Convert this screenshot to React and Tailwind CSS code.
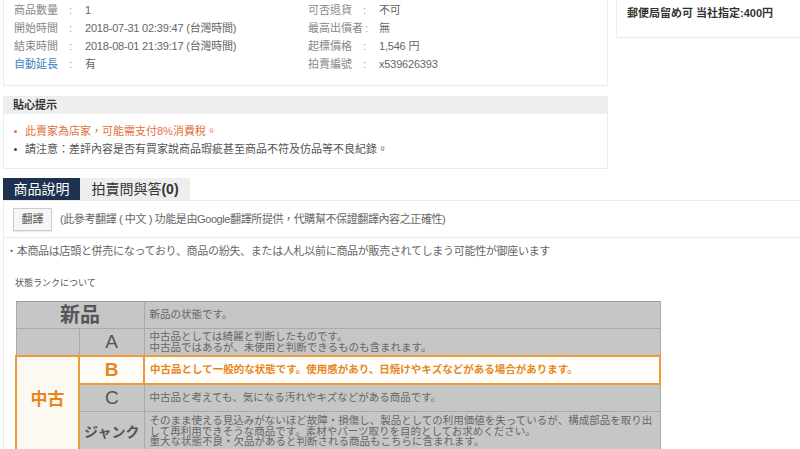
import React from 'react';

const tc = { fontFamily: '"Liberation Sans", "Noto Sans CJK TC", sans-serif' };
const jp = { fontFamily: '"Liberation Sans", "Noto Sans CJK JP", sans-serif' };

function InfoRow({ label, value, labelClass = 'text-[#888]', valueClass = 'text-[#666]' }) {
  return (
    <div className="flex h-[18px] items-center">
      <span className={`w-[55px] ${labelClass}`}>{label}</span>
      <span className="w-[16px] text-[#999]">:</span>
      <span className={`${valueClass} tracking-[-0.2px]`}>{value}</span>
    </div>
  );
}

function TopInfo() {
  return (
    <div className="flex">
      <div className="w-[605px] ml-[3px]">
        <div className="border-x border-b border-[#ececec] pt-[1px] pb-[12px] pl-[10px] flex text-[11px]">
          <div className="w-[294px]">
            <InfoRow label="商品數量" value="1" />
            <InfoRow label="開始時間" value="2018-07-31 02:39:47 (台灣時間)" />
            <InfoRow label="結束時間" value="2018-08-01 21:39:17 (台灣時間)" />
            <InfoRow label="自動延長" value="有" labelClass="text-[#3f7fbf]" />
          </div>
          <div>
            <InfoRow label="可否退貨" value="不可" />
            <div className="flex h-[18px] items-center">
              <span className="w-[57px] text-[#888]">最高出價者</span>
              <span className="w-[14px] text-[#999]">:</span>
              <span className="text-[#666]">無</span>
            </div>
            <InfoRow label="起標價格" value="1,546 円" />
            <InfoRow label="拍賣編號" value="x539626393" />
          </div>
        </div>

        <div className="mt-[10px] border border-[#ececec] h-[73px] text-[11px]">
          <div className="h-[17px] bg-[#eeeeee] pl-[9px] flex items-center text-[#333] font-bold">貼心提示</div>
          <ul className="pl-[10px] pt-[8px]">
            <li className="flex items-center h-[18px] text-[#e07040]">
              <span className="w-[3px] h-[3px] rounded-full bg-[#e07040] mr-[8px]"></span>
              此賣家為店家，可能需支付8%消費稅。
            </li>
            <li className="flex items-center h-[18px] text-[#555]">
              <span className="w-[3px] h-[3px] rounded-full bg-[#444] mr-[8px]"></span>
              請注意：差評內容是否有買家說商品瑕疵甚至商品不符及仿品等不良紀錄。
            </li>
          </ul>
        </div>
      </div>

      <div className="ml-[8px] flex-1 h-[38px] border-l border-b border-[#ececec] pl-[10px] pt-[5px] text-[11px] font-bold text-[#333]">
        郵便局留め可 当社指定:400円
      </div>
    </div>
  );
}

function Tabs() {
  return (
    <div className="mt-[9px] ml-[3px] flex border-b border-[#ececec]">
      <div className="w-[77px] h-[22px] bg-[#1d3150] text-white text-[14px] flex items-center justify-center">商品說明</div>
      <div className="w-[110px] h-[22px] bg-[#eeeeee] text-[#333] text-[14px] flex items-center justify-center">
        拍賣問與答<b>(0)</b>
      </div>
    </div>
  );
}

const g = 'bg-[#c6c6c6] border border-[#a9a9a9]';
const o = 'border-[#ef9a3a]';

function RankTable() {
  return (
    <table className="ml-[11px] mt-[12px] w-[646px] border-collapse table-fixed" style={jp}>
      <colgroup>
        <col className="w-[63px]" />
        <col className="w-[65px]" />
        <col />
      </colgroup>
      <tbody>
        <tr className="h-[27px]">
          <td colSpan={2} className={`${g} border-t-[#999] text-center text-[20px] font-bold text-[#555] leading-none`}>新品</td>
          <td className={`${g} border-t-[#999] pl-[5px] text-[10.5px] text-[#666]`}>新品の状態です。</td>
        </tr>
        <tr className="h-[27px]">
          <td className={g}></td>
          <td className={`${g} text-center text-[19px] text-[#555] leading-none`}>A</td>
          <td className={`${g} pl-[5px] text-[10.5px] leading-[11px] text-[#666]`}>
            中古品としては綺麗と判断したものです。<br />中古品ではあるが、未使用と判断できるものも含まれます。
          </td>
        </tr>
        <tr className="h-[28px]">
          <td rowSpan={3} className={`bg-[#fcf8f2] border-2 ${o} pb-[8px] text-center text-[17px] font-bold text-[#e8861c] leading-none`}>中古</td>
          <td className={`bg-[#fffcf8] border-y-2 ${o} border-l border-l-[#e6ddd0] text-center text-[19px] font-bold text-[#e8861c] leading-none`}>B</td>
          <td className={`bg-[#fffefb] border-2 ${o} pl-[5px] text-[10.5px] font-bold text-[#e8861c]`}>
            中古品として一般的な状態です。使用感があり、日焼けやキズなどがある場合があります。
          </td>
        </tr>
        <tr className="h-[28px]">
          <td className={`${g} text-center text-[19px] text-[#555] leading-none`}>C</td>
          <td className={`${g} pl-[5px] text-[10.5px] text-[#666]`}>中古品と考えても、気になる汚れやキズなどがある商品です。</td>
        </tr>
        <tr className="h-[40px]">
          <td className={`${g} text-center text-[14px] font-bold text-[#555] leading-none`}>ジャンク</td>
          <td className={`${g} pl-[5px] pt-[3px] align-top text-[10.5px] leading-[10.5px] text-[#666]`}>
            そのまま使える見込みがないほど故障・損傷し、製品としての利用価値を失っているが、構成部品を取り出<br />
            して再利用できそうな商品です。素材やパーツ取りを目的としてお求めください。<br />
            重大な状態不良・欠品があると判断される商品もこちらに含まれます。
          </td>
        </tr>
      </tbody>
    </table>
  );
}

export default function App() {
  return (
    <div className="w-[800px] h-[449px] overflow-hidden bg-white" style={tc}>
      <TopInfo />
      <Tabs />
      <div className="ml-[3px] border-l border-[#ececec] h-[400px]">
        <div className="flex items-center h-[37px] pl-[9px] border-b border-[#ececec]">
          <button className="h-[23px] w-[39px] border border-[#cccccc] bg-[#f6f6f6] text-[11px] text-[#555] shadow-[0_1px_1px_rgba(0,0,0,0.08)]">翻譯</button>
          <span className="ml-[8px] text-[11px] text-[#666] tracking-[-0.4px]">(此參考翻譯 ( 中文 ) 功能是由Google翻譯所提供，代購幫不保證翻譯內容之正確性)</span>
        </div>
        <div className="pl-[2px] pt-[6px] h-[20px] text-[11px] text-[#666] tracking-[-0.3px] leading-[14px]" style={jp}>
          ・本商品は店頭と併売になっており、商品の紛失、または人札以前に商品が販売されてしまう可能性が御座います
        </div>
        <div className="pl-[11px] mt-[19px] text-[9px] text-[#555] leading-[12px]" style={jp}>状態ランクについて</div>
        <RankTable />
      </div>
    </div>
  );
}
